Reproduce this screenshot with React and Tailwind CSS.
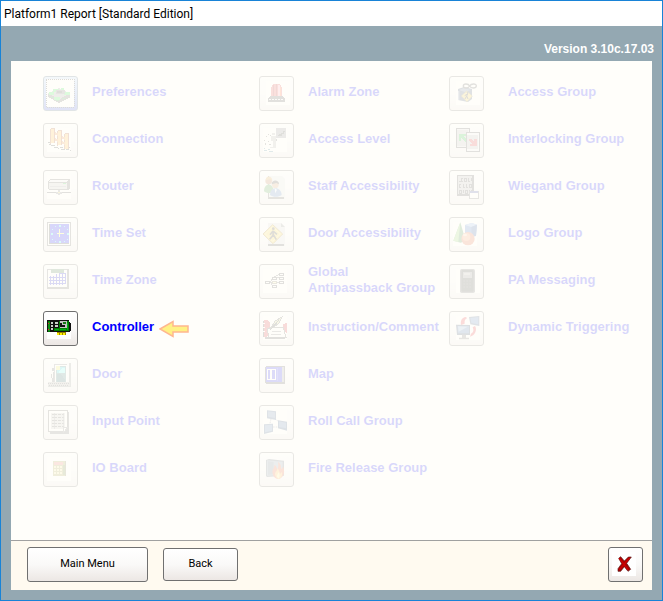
import React from "react";

/* Every glyph is drawn on a 99-unit canvas, three units to one screen pixel. */
const glyphs = {
  preferences: (
    <>
      <rect x="10" y="9" width="84" height="84" fill="#fff" stroke="#222" strokeWidth="3" strokeDasharray="3 3" />
      <path d="M15 54 47 37 81 54V64L48 81 15 63Z" fill="#555" />
      <path d="M15 52 47 36 81 52 48 70Z" fill="#9a9a9a" />
      <path d="M31 39h18v9H31zM17 48h16v9H17zM63 47h18v9H63zM54 37h9v6h-9zM34 63h18v9H34z" fill="#25e53c" />
      <path d="M38 42h27v12H38z" fill="#666" />
      <path d="M42 45h15v6H42z" fill="#333" />
      <path d="M24 63h6v3h-6zM57 66h12v3H57zM39 72h9v3h-9z" fill="#1b9b31" />
    </>
  ),
  connection: (
    <>
      <rect x="12" y="15" width="72" height="72" fill="#fff" />
      <path d="M24 18h12v42H24zM45 24h12v42H45zM66 33h12v45H66z" fill="#ffb32c" />
      <path d="M33 18h4v42h-4zM54 24h4v42h-4zM75 33h3v45h-3z" fill="#a83a10" />
      <path d="M24 15h12v3H24zM21 18h3v45h-3zM45 21h12v3H45zM42 24h3v45h-3zM66 30h12v3H66zM63 33h3v48h-3z" fill="#a8480e" />
      <path d="m36 27 9 4v8l-9-4zM36 45l9 4v8l-9-4zM57 39l9 4v8l-9-4zM57 54l9 4v8l-9-4z" fill="#e98528" />
      <path d="M15 57h6v3h-6zM24 66h12v3H24zM33 72h12v3H33zM45 75h3v3h-3zM51 72h9v3h-9zM54 78h12v3H54zM18 63h6v3h-6zM69 78h9v3h-9zM78 72h3v3h-3zM81 81h3v3h-3z" fill="#333" />
    </>
  ),
  router: (
    <>
      <rect x="12" y="15" width="72" height="72" fill="#fff" />
      <path d="M21 27h57l3 3v24l-5 6H18l-3-3V36z" fill="#555" />
      <path d="M21 30h54l-3 6H18z" fill="#eee" />
      <path d="M18 38h54v18H18z" fill="#c4c4c4" />
      <path d="M21 48h48v3H21z" fill="#999" />
      <path d="M60 39h9v3h-9z" fill="#24bf34" />
      <path d="M12 66h72v3H12z" fill="#444" />
      <path d="M45 60h6v15h-6zM39 66h18v6H39z" fill="#777" />
      <path d="M45 66h6v3h-6z" fill="#e2cf42" />
    </>
  ),
  timeSet: (
    <>
      <rect x="12" y="15" width="72" height="72" fill="#555" />
      <rect x="15" y="18" width="66" height="66" fill="#fff" />
      <rect x="18" y="21" width="60" height="60" fill="#333" />
      <rect x="21" y="21" width="57" height="57" fill="#0000ff" />
      <path d="M48 24h6v6h-6zM48 72h6v6h-6zM24 48h6v6h-6zM72 48h6v6h-6zM36 27h3v3h-3zM63 27h3v3h-3zM27 36h3v3h-3zM72 36h3v3h-3zM27 66h3v3h-3zM72 66h3v3h-3zM36 72h3v3h-3zM63 72h3v3h-3z" fill="#16edee" />
      <path d="M48 36h3v12h12v3H51v9h-3v-9h-6v-3h6z" fill="#ffff44" />
    </>
  ),
  timeZone: (
    <>
      <path d="M12 15h66v60H12z" fill="#666" />
      <path d="M15 18h57v51H15z" fill="#fff" />
      <path d="M24 15h39v12H24z" fill="#39743d" />
      <path d="M72 15h6v60H12v-6h60z" fill="#555" />
      <path d="M18 39h48v3H18zM18 48h48v3H18zM18 57h48v3H18zM21 36h3v27h-3zM30 36h3v27h-3zM39 30h3v33h-3zM48 30h3v33h-3zM57 30h3v33h-3zM66 27h3v33h-3zM48 27h21v3H48z" fill="#1717d9" />
    </>
  ),
  controller: (
    <>
      <rect x="12" y="12" width="72" height="72" fill="#fff" />
      <path d="M12 27h66v36H12z" fill="#007a00" />
      <path d="M12 27h66v3H12zM12 30h3v33h-3zM78 33h3v3h3v24h-3v3h-3z" fill="#111" />
      <path d="M15 33h6v27h-6z" fill="#0f8f14" />
      <path d="M15 36h3v3h-3zM15 54h3v3h-3z" fill="#ed2424" />
      <path d="M21 30h12v33H21zM33 30h15v21H33z" fill="#111" />
      <path d="M24 33h6v6h-6zM24 42h6v6h-6zM24 51h6v6h-6zM36 33h9v6h-9zM36 42h9v6h-9z" fill="#c8d2c8" />
      <path d="M51 30h21v21H51z" fill="#c4c4c4" />
      <path d="M51 36h6v12h-6zM57 42h9v6h-9z" fill="#111" />
      <path d="M60 33h9v6h-9z" fill="#197a19" />
      <path d="M36 54h12v3H36zM51 54h18v3H51zM72 36h3v21h-3z" fill="#00ad16" />
      <path d="M33 60h48v3H33z" fill="#111" />
      <path d="M42 63h27v9H42z" fill="#9a8500" />
      <path d="M42 66h6v6h-6zM51 66h6v6h-6zM60 66h6v6h-6z" fill="#ffef00" />
    </>
  ),
  door: (
    <>
      <path d="M33 18h39v60H33z" fill="#777" />
      <path d="M36 21h36v54H36z" fill="#fff" />
      <path d="M39 24h30v48H39z" fill="#347a7d" />
      <path d="M42 27h24v18H42z" fill="#22d3e5" />
      <path d="M39 24h12v12H39z" fill="#efee54" />
      <path d="m48 39 9-9h9v15H48z" fill="#6ff" />
      <path d="M42 48h12l12 18v6H42z" fill="#1e5b67" />
      <path d="M78 15h6v72H15v-6h63z" fill="#888" />
      <path d="M27 30h6v9h-6zM30 42h3v36h-3zM24 48h3v12h-3zM27 60h3v18h-3z" fill="#666" />
      <path d="M15 72h66v12H15z" fill="#aaa" />
      <path d="M15 75h63M18 81h60" stroke="#444" strokeWidth="3" strokeDasharray="3 3" />
    </>
  ),
  inputPoint: (
    <>
      <path d="M15 15h57v63H15z" fill="#fff" stroke="#555" strokeWidth="3" />
      <path d="M75 21h3v66H21v-9h42l12-12z" fill="#666" />
      <path d="M24 24h42v48H24z" fill="#ccc" />
      <path d="M27 27h36M27 36h36M27 45h36M27 54h36M27 63h36" stroke="#555" strokeWidth="3" strokeDasharray="15 3 9 3" />
      <path d="M33 24v48M60 24v48" stroke="#777" strokeWidth="2" />
      <path d="M60 66h15L63 81H60z" fill="#fff" stroke="#777" strokeWidth="3" />
    </>
  ),
  ioBoard: (
    <>
      <rect x="12" y="15" width="72" height="72" fill="#fff" />
      <path d="M30 27h36v45H30z" fill="#a09638" />
      <path d="M66 27h3v45h-3z" fill="#6c6832" />
      <path d="M33 30h27v9H33z" fill="#e9685a" />
      <path d="M33 42h6v6h-6zM42 42h6v6h-6zM51 42h6v6h-6zM33 51h6v6h-6zM42 51h6v6h-6zM51 51h6v6h-6zM33 60h6v6h-6zM42 60h6v6h-6zM51 60h6v6h-6z" fill="#f2e48c" />
      <path d="M60 39h6v30h-6z" fill="#688026" />
    </>
  ),
  alarmZone: (
    <>
      <rect x="21" y="15" width="72" height="72" fill="#fff" />
      <path d="M36 60V36l6-12h21l6 12v24z" fill="#e33b3d" />
      <path d="M42 28h4v32h-4zM51 24h3v36h-3z" fill="#a81119" />
      <path d="M57 27h5v33h-5z" fill="#ff9ab0" />
      <path d="M63 33h3v27h-3z" fill="#ff5a21" />
      <path d="M33 60h39l6 9v9H27v-9z" fill="#444" />
      <path d="M30 69h45" stroke="#eee" strokeWidth="3" strokeDasharray="6 3" />
    </>
  ),
  accessLevel: (
    <>
      <rect x="12" y="15" width="72" height="72" fill="#fff" />
      <path d="M51 15h30v30H51z" fill="#85858d" />
      <path d="M57 36h3v-3h3v3h3v-6h6v-6h6" fill="none" stroke="#333" strokeWidth="3" />
      <path d="M39 30h9v6h-9zM36 39h15v15H36zM42 54h9v18h-9zM33 72h18v3H33z" fill="#aaa" />
      <path d="M27 33h3v3h-3zM21 39h3v3h-3zM15 51h3v3h-3zM18 60h3v6h-3zM27 54h3v3h-3zM30 63h6v3h-6zM51 48h3v6h-3zM33 36h3v3h-3z" fill="#555" />
      <path d="M15 81h9v3h-9zM27 78h6v3h-6zM30 84h12v3H30zM15 75h3v3h-3z" fill="#3e8094" />
    </>
  ),
  staff: (
    <>
      <path d="M27 18h42l9 9v60H27z" fill="#e4e4e4" />
      <path d="M27 81h48v6H27zM27 18h3v66h-3z" fill="#555" />
      <circle cx="29" cy="33" r="10" fill="#bb7448" />
      <path d="M20 31c0-18 21-14 20 2l-6-5z" fill="#dc9d3a" />
      <path d="M15 64c0-27 28-27 29 0-8 7-21 7-29 0" fill="#429b42" />
      <circle cx="49" cy="44" r="10" fill="#d29a65" />
      <path d="M38 43c0-15 22-15 22 0l-8-4z" fill="#3b3430" />
      <path d="M33 75c0-27 34-27 35 0-9 7-26 7-35 0" fill="#4e81c5" />
      <path d="m47 55 7 4-5 11z" fill="#eaf2ff" />
    </>
  ),
  doorAccess: (
    <>
      <path d="M27 18h39l12 12v57H27z" fill="#ddd" />
      <path d="M27 81h48v6H27z" fill="#444" />
      <path d="m66 18 12 12H66z" fill="#888" />
      <path d="m12 51 29-28 30 28-29 29z" fill="#f3cd31" stroke="#a7790c" strokeWidth="3" />
      <path d="m19 51 22-22 23 22-23 22z" fill="none" stroke="#ffed83" strokeWidth="2" />
      <circle cx="43" cy="35" r="4" fill="#2f2a1b" />
      <path d="m42 42-9 11M43 41l-1 14-10 12M43 53l9 15M44 44l10 8" stroke="#2f2a1b" strokeWidth="5" fill="none" />
    </>
  ),
  global: (
    <>
      <rect x="12" y="15" width="72" height="72" fill="#fff" />
      <path d="M30 55h42M33 55l9-14h27M45 40l15-9h12M36 58l6 10" fill="none" stroke="#666" strokeWidth="3" />
      <g fill="#fff" stroke="#444" strokeWidth="3">
        <rect x="19" y="52" width="12" height="6" />
        <rect x="40" y="40" width="12" height="6" />
        <rect x="61" y="29" width="12" height="6" />
        <rect x="61" y="40" width="12" height="6" />
        <rect x="61" y="52" width="12" height="6" />
        <rect x="40" y="64" width="12" height="6" />
      </g>
      <rect x="40" y="52" width="12" height="6" fill="#fff8a0" stroke="#777451" strokeWidth="3" />
    </>
  ),
  instruction: (
    <>
      <rect x="12" y="15" width="72" height="72" fill="#fff" />
      <path d="M15 27h12l6 9v27l-9 15h-9z" fill="#d5222d" />
      <path d="M12 30h3v48h-3z" fill="#333" />
      <path d="M12 36h6M12 48h6M12 60h6" stroke="#fff" strokeWidth="3" />
      <path d="M72 39h6v-3h6v33l-3-6h-6z" fill="#d5222d" />
      <path d="M24 54 39 48h33l9 30H30z" fill="#fff" stroke="#555" strokeWidth="3" />
      <path d="M18 78h60v6H18z" fill="#444" />
      <path d="M36 69h30M39 60h27" stroke="#777" strokeWidth="3" />
      <path d="m36 51 12-21 21-12-9 18-15 12z" fill="#d7d47e" stroke="#555" strokeWidth="3" />
      <path d="m33 57 27-30" stroke="#333" strokeWidth="3" />
    </>
  ),
  map: (
    <>
      <path d="M21 24h54l3 3v48l-3 3H21l-3-3V27z" fill="#444" />
      <path d="M21 27h48v45H21z" fill="#1a1aee" />
      <path d="M69 27h6v45h-6z" fill="#999" />
      <path d="M24 33h9v30h-9zM36 33h12v30H36z" fill="none" stroke="#fff" strokeWidth="3" />
      <path d="M24 33h24M24 63h24" stroke="#fff" strokeWidth="3" />
      <path d="M54 30h3v39h-3z" fill="#4545ff" />
    </>
  ),
  rollCall: (
    <>
      <rect x="12" y="15" width="72" height="72" fill="#fff" />
      <path d="m36 42-4 18M48 42l18 12M42 66h24" stroke="#889" strokeWidth="3" strokeDasharray="5 3" />
      <path d="m24 16 27 3v26l-27-5z" fill="#2f4f80" />
      <path d="m27 19 21 3v17l-21-4z" fill="#5c7db0" />
      <path d="m57 46 27 4v27l-27-7z" fill="#264878" />
      <path d="m60 49 21 4v17l-21-4z" fill="#4f76b0" />
      <path d="m15 58 27-2v24l-27 7z" fill="#2f5080" />
      <path d="m18 61 21-2v18l-21 5z" fill="#5f86ba" />
    </>
  ),
  fire: (
    <>
      <path d="m21 24 9-3 45 5v45l-51 4-3-3z" fill="#596474" />
      <path d="m24 25 47 4v39l-47 3z" fill="#8797ae" />
      <path d="m27 28 17 2v37l-17 2z" fill="#66778f" />
      <path d="M41 65c-3-13 6-15 5-26 8 4 6 9 10 13 2-8 3-14 1-22 12 8 7 15 10 22l5-8c8 18 1 34-14 37-10-2-15-7-17-16" fill="#eb5429" />
      <path d="M48 67c0-9 8-10 7-18 7 7 5 10 9 16l5-6c2 14-4 21-10 22-7-2-10-7-11-14" fill="#ffb138" />
      <path d="M54 74c-1-7 4-8 4-14 5 7 5 15 1 20z" fill="#fff07a" />
    </>
  ),
  accessGroup: (
    <>
      <rect x="21" y="15" width="72" height="72" fill="#fff" />
      <path d="m27 39 18-6 24 6v30l-12 9-30-6z" fill="#34496b" />
      <path d="m30 42 15-6 21 6-19 6z" fill="#6a7fa1" />
      <path d="M27 45h4v27h-4z" fill="#92a1b9" />
      <path d="M43 30c0-8 15-8 19 0s19 8 20 0-16-8-20 0-19 8-19 0" fill="none" stroke="#454545" strokeWidth="4" />
      <path d="m37 60 16-15 17 15-16 17z" fill="#efc934" stroke="#8d741c" strokeWidth="2" />
      <path d="M53 49h3v5l-3 6 4 9M54 55l-7 4M53 60l-5 9" fill="none" stroke="#222" strokeWidth="3" />
    </>
  ),
  interlocking: (
    <>
      <path d="M22 16h39v57H22z" fill="#ddd" stroke="#444" strokeWidth="3" />
      <path d="M25 22h33v48H25z" fill="#bbb" />
      <path d="M30 33h21v6h-9l12 12-6 6-12-12v9h-6z" fill="#17b933" />
      <path d="M52 28h39v57H52z" fill="#eee" stroke="#444" strokeWidth="3" />
      <path d="M55 36h33v42H55z" fill="#bbb" />
      <path d="M60 48h6l9 9v-9h9v21H63v-6h6l-9-9z" fill="#dd2a30" />
    </>
  ),
  wiegand: (
    <>
      <path d="M24 15h51v63H24z" fill="#444" />
      <path d="M27 18h42v54H27z" fill="#b4b4b4" />
      <g fill="none" stroke="#444" strokeWidth="3">
        <path d="M30 33h6M42 24h-6v9h6M45 24h6v9h-6zM57 24v9h6M66 24v9M36 42h-6v9h6M42 42v9h6M51 42v9h6M60 42h6v9h-6zM30 60h6v9h-6zM42 60v9M48 60h6v9h-6zM60 60v9M66 60v9" />
      </g>
      <path d="M61 64h27v21H61z" fill="#fff" stroke="#666" strokeWidth="3" />
      <path d="M63 63h24v6H63z" fill="#36439d" />
    </>
  ),
  logo: (
    <>
      <rect x="12" y="15" width="72" height="72" fill="#fff" />
      <path d="m34 16 16 55-15 6-22-6z" fill="#398b3e" />
      <path d="m34 16-6 59-15-4z" fill="#8ed165" />
      <path d="m48 24 20-6 16 5-3 34-33 1z" fill="#3f73ca" />
      <path d="m48 24 20-6 16 5-17 7z" fill="#8db4ee" />
      <path d="m67 30 17-7-3 34-13 3z" fill="#2552a2" />
      <circle cx="57" cy="65" r="20" fill="#e45b31" />
      <circle cx="52" cy="60" r="12" fill="#f79058" />
      <ellipse cx="48" cy="54" rx="6" ry="4" fill="#ffd0a5" />
    </>
  ),
  messaging: (
    <>
      <rect x="21" y="15" width="72" height="72" fill="#fff" />
      <rect x="33" y="15" width="45" height="72" rx="5" fill="#666" />
      <rect x="37" y="18" width="37" height="65" rx="3" fill="#333" />
      <path d="M42 24h27v18H42z" fill="#858585" />
      <path d="M45 27h18v6H45z" fill="#aaa" />
      <path d="M43 51h27M43 60h27M43 69h27" stroke="#575757" strokeWidth="3" strokeDasharray="5 4" />
    </>
  ),
  triggering: (
    <>
      <rect x="21" y="15" width="72" height="72" fill="#fff" />
      <path d="M51 18c-14 1-17 14-15 24l11-4c-1-9 1-13 7-16z" fill="#e9252d" />
      <path d="M78 45c8 12-1 29-15 32l3-9c8-4 9-11 5-19z" fill="#e9252d" />
      <path d="m60 18 31-3v30l-27-5z" fill="#344f79" />
      <path d="m64 21 24-3v22l-21-4z" fill="#4f7fc0" />
      <path d="m21 41 42 1v30H24z" fill="#263d60" />
      <path d="M25 45h35v22H27z" fill="#3f6cb0" />
      <path d="m27 46 29 1-27 15z" fill="#8fb0dc" />
      <path d="M39 71h12v9h9v5H30v-5h9z" fill="#666" />
    </>
  ),
};

const smoothGlyphs = [
  "staff",
  "doorAccess",
  "fire",
  "accessGroup",
  "logo",
  "messaging",
  "triggering",
  "rollCall",
];

const columns = [
  {
    gap: "gap-[14px]",
    items: [
      ["Preferences", "preferences"],
      ["Connection", "connection"],
      ["Router", "router"],
      ["Time Set", "timeSet"],
      ["Time Zone", "timeZone"],
      ["Controller", "controller"],
      ["Door", "door"],
      ["Input Point", "inputPoint"],
      ["IO Board", "ioBoard"],
    ],
  },
  {
    gap: "gap-[14px]",
    items: [
      ["Alarm Zone", "alarmZone"],
      ["Access Level", "accessLevel"],
      ["Staff Accessibility", "staff"],
      ["Door Accessibility", "doorAccess"],
      ["Global\nAntipassback Group", "global"],
      ["Instruction/Comment", "instruction"],
      ["Map", "map"],
      ["Roll Call Group", "rollCall"],
      ["Fire Release Group", "fire"],
    ],
  },
  {
    gap: "gap-6",
    items: [
      ["Access Group", "accessGroup"],
      ["Interlocking Group", "interlocking"],
      ["Wiegand Group", "wiegand"],
      ["Logo Group", "logo"],
      ["PA Messaging", "messaging"],
      ["Dynamic Triggering", "triggering"],
    ],
  },
];

const face =
  "rounded-[3px] border border-[#707070] bg-linear-to-b from-white via-[#faf9f8] to-[#ece7e4]";

function ReportItem({ label, glyph, gap }) {
  const active = glyph === "controller";
  const focused = glyph === "preferences";
  const id = "report-" + glyph;
  return (
    <li className={"flex h-[47px] items-center " + gap + (active ? "" : " opacity-15")}>
      <button
        type="button"
        aria-labelledby={id}
        disabled={!active}
        className={
          "size-[35px] shrink-0 " +
          (focused
            ? "rounded-[3px] border border-[#3c5a78] bg-linear-to-b from-[#b9dcff] to-[#3c4ee0]"
            : face)
        }
      >
        <svg
          viewBox="3 3 99 99"
          className="block size-full"
          aria-hidden="true"
          shapeRendering={smoothGlyphs.includes(glyph) ? "auto" : "crispEdges"}
        >
          {glyphs[glyph]}
        </svg>
      </button>
      <span id={id} className="pb-1 text-[13px] leading-4 font-bold whitespace-pre text-[#0000ff]">
        {label}
      </span>
      {active && (
        <svg viewBox="0 0 30 18" className="-ml-[9px] h-[18px] w-[30px] shrink-0" aria-hidden="true">
          <path d="M1 9 14 1.5V6H29v6H14v4.5Z" fill="#fff184" stroke="#ffb78f" strokeWidth="1.5" />
        </svg>
      )}
    </li>
  );
}

export default function App() {
  return (
    <div className="flex min-h-screen flex-col border border-[#1883d7] bg-[#94a8b2] font-['Liberation_Sans',Arial,sans-serif]">
      <header className="flex h-[25px] shrink-0 items-center bg-white px-[3px]">
        <h1 className="font-[Roboto,'Noto_Sans',sans-serif] text-xs whitespace-nowrap text-black">
          Platform1 Report [Standard Edition]
        </h1>
      </header>
      <p className="h-[35px] shrink-0 px-2 pt-[15px] text-right text-xs leading-4 font-bold text-white">
        Version 3.10c.17.03
      </p>
      <div className="mx-[10px] mb-[10px] flex grow flex-col bg-[#fffefa]">
        <main className="grid grow grid-cols-[216fr_190fr_203fr] pt-[9px] pb-10 pl-8">
          {columns.map((column) => (
            <ul key={column.items[0][0]}>
              {column.items.map(([label, glyph]) => (
                <ReportItem key={glyph} label={label} glyph={glyph} gap={column.gap} />
              ))}
            </ul>
          ))}
        </main>
        <footer className="flex h-[50px] shrink-0 items-center gap-[15px] border-t border-[#a0a0a0] bg-[#fffaf0] pr-[9px] pb-[2px] pl-4 font-[Roboto,'Noto_Sans',sans-serif] text-[11px] text-black">
          <button type="button" className={"h-[35px] w-[121px] " + face}>
            Main Menu
          </button>
          <button type="button" className={"h-[33px] w-[75px] " + face}>
            Back
          </button>
          <button type="button" aria-label="Close" className={"ml-auto size-[35px] " + face}>
            <svg viewBox="3 3 99 99" className="block size-full" aria-hidden="true">
              <rect x="12" y="15" width="72" height="72" fill="#fff" />
              <path d="M32 34 38 29 49 42 61 30 70 30 56 49 68 67 60 73 49 59 38 73 30 73 30 65 41 50Z" fill="#a80000" stroke="#5b1515" strokeWidth="2" />
              <path d="m34 34 26 34M65 33 34 68" stroke="#cd0000" strokeWidth="4" />
            </svg>
          </button>
        </footer>
      </div>
    </div>
  );
}
